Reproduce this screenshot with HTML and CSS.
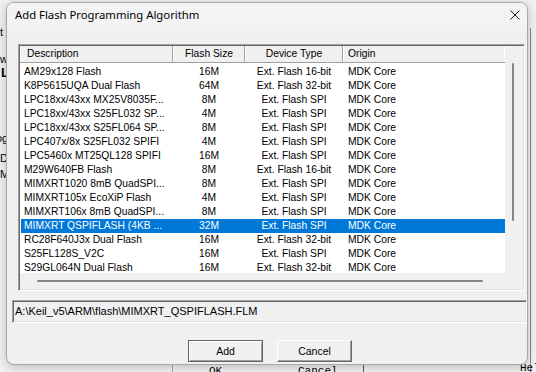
FILE: index.html
```html
<!DOCTYPE html>
<html>
<head>
<meta charset="utf-8">
<link rel="stylesheet" href="styles.css">
</head>
<body>
<div class="desk">
  <div class="frag fl">t</div>
  <div class="frag fw">w</div>
  <div class="frag fL">L</div>
  <div class="frag fog">og</div>
  <div class="frag fD">D</div>
  <div class="frag fM">M</div>
  <div class="vline v1"></div>
  <div class="vline v2"></div>
  <div class="vline v3"></div>
  <div class="frag bok">OK</div>
  <div class="frag bcancel">Cancel</div>
  <div class="frag bhelp">Help</div>
</div>
<div class="dialog">
  <div class="titlebar">
    <span class="title">Add Flash Programming Algorithm</span>
    <svg class="close" width="10" height="10" viewBox="0 0 10 10"><path d="M0.5 0.5 L9.5 9.5 M9.5 0.5 L0.5 9.5" stroke="#1a1a1a" stroke-width="1" fill="none"/></svg>
  </div>
  <div class="body">
    <div class="listbox">
      <div class="listmain">
        <div class="lv">
          <div class="hdr">
            <div class="hc c1">Description</div>
            <div class="hc c2">Flash Size</div>
            <div class="hc c3">Device Type</div>
            <div class="hc c4">Origin</div>
          </div>
          <div class="rows">
            <div class="row"><span class="c1">AM29x128 Flash</span><span class="c2">16M</span><span class="c3">Ext. Flash 16-bit</span><span class="c4">MDK Core</span></div>
            <div class="row"><span class="c1">K8P5615UQA Dual Flash</span><span class="c2">64M</span><span class="c3">Ext. Flash 32-bit</span><span class="c4">MDK Core</span></div>
            <div class="row"><span class="c1">LPC18xx/43xx MX25V8035F...</span><span class="c2">8M</span><span class="c3">Ext. Flash SPI</span><span class="c4">MDK Core</span></div>
            <div class="row"><span class="c1">LPC18xx/43xx S25FL032 SP...</span><span class="c2">4M</span><span class="c3">Ext. Flash SPI</span><span class="c4">MDK Core</span></div>
            <div class="row"><span class="c1">LPC18xx/43xx S25FL064 SP...</span><span class="c2">8M</span><span class="c3">Ext. Flash SPI</span><span class="c4">MDK Core</span></div>
            <div class="row"><span class="c1">LPC407x/8x S25FL032 SPIFI</span><span class="c2">4M</span><span class="c3">Ext. Flash SPI</span><span class="c4">MDK Core</span></div>
            <div class="row"><span class="c1">LPC5460x MT25QL128 SPIFI</span><span class="c2">16M</span><span class="c3">Ext. Flash SPI</span><span class="c4">MDK Core</span></div>
            <div class="row"><span class="c1">M29W640FB Flash</span><span class="c2">8M</span><span class="c3">Ext. Flash 16-bit</span><span class="c4">MDK Core</span></div>
            <div class="row"><span class="c1">MIMXRT1020 8mB QuadSPI...</span><span class="c2">8M</span><span class="c3">Ext. Flash SPI</span><span class="c4">MDK Core</span></div>
            <div class="row"><span class="c1">MIMXRT105x EcoXiP Flash</span><span class="c2">4M</span><span class="c3">Ext. Flash SPI</span><span class="c4">MDK Core</span></div>
            <div class="row"><span class="c1">MIMXRT106x 8mB QuadSPI...</span><span class="c2">8M</span><span class="c3">Ext. Flash SPI</span><span class="c4">MDK Core</span></div>
            <div class="row sel"><span class="c1">MIMXRT QSPIFLASH (4KB ...</span><span class="c2">32M</span><span class="c3">Ext. Flash SPI</span><span class="c4">MDK Core</span></div>
            <div class="row"><span class="c1">RC28F640J3x Dual Flash</span><span class="c2">16M</span><span class="c3">Ext. Flash 32-bit</span><span class="c4">MDK Core</span></div>
            <div class="row"><span class="c1">S25FL128S_V2C</span><span class="c2">16M</span><span class="c3">Ext. Flash SPI</span><span class="c4">MDK Core</span></div>
            <div class="row"><span class="c1">S29GL064N Dual Flash</span><span class="c2">16M</span><span class="c3">Ext. Flash 32-bit</span><span class="c4">MDK Core</span></div>
          </div>
        </div>
        <div class="vscroll"><div class="vthumb"></div></div>
      </div>
      <div class="hscroll"><div class="hthumb"></div></div>
    </div>
    <div class="path">A:\Keil_v5\ARM\flash\MIMXRT_QSPIFLASH.FLM</div>
    <div class="buttons">
      <button class="btn default">Add</button>
      <button class="btn">Cancel</button>
    </div>
  </div>
</div>
</body>
</html>
```

FILE: styles.css
```css
html, body {
  margin: 0;
  padding: 0;
}
body {
  width: 536px;
  height: 372px;
  overflow: hidden;
  background: #f0f0f0;
  position: relative;
  font-family: "Liberation Sans", Arial, sans-serif;
  color: #000;
}
.desk {
  position: absolute;
  inset: 0;
}
.frag {
  position: absolute;
  font-size: 11px;
  line-height: 12px;
  color: #000;
}
.fl { left: 0; top: 26px; }
.fw { left: 0; top: 53px; }
.fL { left: 1px; top: 66px; font-weight: bold; font-size: 13px; line-height: 13px; }
.fog { left: -4px; top: 132px; }
.fD { left: 0; top: 152px; }
.fM { left: 0; top: 168px; }
.bok { left: 209px; top: 365px; font-family: "Liberation Mono", monospace; }
.bcancel { left: 298px; top: 365px; font-family: "Liberation Mono", monospace; }
.bhelp { left: 520px; top: 362px; font-family: "Liberation Mono", monospace; }
.vline {
  position: absolute;
  width: 1px;
  background: #8a8a8a;
}
.v1 { left: 530px; top: 28px; height: 344px; }
.v2 { left: 363px; top: 360px; height: 12px; background: #555; }
.v3 { left: 172px; top: 360px; height: 12px; background: #aaa; }

.dialog {
  position: absolute;
  left: 6px;
  top: 2px;
  width: 520px;
  height: 361px;
  border: 1px solid #a8a8a8;
  border-radius: 8px;
  background: #f0f0f0;
  box-shadow: 0 2px 10px rgba(0, 0, 0, 0.22);
  overflow: hidden;
  display: flex;
  flex-direction: column;
}
.titlebar {
  height: 28px;
  flex: none;
  background: #f3f3f3;
  display: flex;
  justify-content: space-between;
  align-items: flex-start;
  padding: 0 7px 0 8px;
}
.title {
  font-family: "Segoe UI", "Noto Sans", sans-serif;
  font-size: 11.3px;
  line-height: 20px;
  padding-top: 2px;
  color: #000;
}
.close {
  margin-top: 7px;
  display: block;
}
.body {
  flex: 1;
  padding: 13px 0 0 5px;
  display: flex;
  flex-direction: column;
}
.listbox {
  margin-left: 6px;
  width: 503px;
  height: 243px;
  border: 1px solid;
  border-color: #a0a0a0 #ffffff #ffffff #a0a0a0;
  box-shadow: inset 1px 1px 0 #696969, inset -1px -1px 0 #e3e3e3;
  padding: 1px;
  display: flex;
  flex-direction: column;
  box-sizing: content-box;
  flex: none;
}
.listmain {
  height: 227px;
  display: flex;
  flex: none;
}
.lv {
  width: 485px;
  background: #fff;
  overflow: hidden;
  font-size: 10.3px;
}
.hdr {
  display: flex;
  height: 16px;
  background: #f0f0f0;
  border-bottom: 1px solid #a0a0a0;
}
.hc {
  box-sizing: border-box;
  line-height: 16px;
  border-left: 1px solid #fff;
  border-right: 1px solid #a0a0a0;
  white-space: nowrap;
}
.hdr .c1 { padding-left: 6px; }
.hdr .c4 { padding-left: 4px; border-right: 1px solid #fff; }
.c1 { width: 153px; flex: none; }
.c2 { width: 72px; flex: none; text-align: center; }
.c3 { width: 98px; flex: none; text-align: center; }
.c4 { width: 162px; flex: none; }
.rows {
  padding-top: 2px;
}
.row {
  display: flex;
  height: 14px;
  line-height: 14px;
  white-space: nowrap;
}
.row .c1 { padding-left: 4px; box-sizing: border-box; }
.row .c4 { padding-left: 5px; box-sizing: border-box; }
.row.sel {
  background: #0078d7;
  color: #fff;
  margin-left: 1px;
}
.row.sel .c1 { width: 152px; padding-left: 3px; }
.vscroll {
  width: 16px;
  background: #f0f0f0;
  position: relative;
}
.vthumb {
  position: absolute;
  left: 7px;
  top: 17px;
  width: 2px;
  height: 158px;
  background: #858585;
  border-radius: 1px;
}
.hscroll {
  height: 16px;
  background: #f0f0f0;
  position: relative;
  flex: none;
}
.hthumb {
  position: absolute;
  left: 17px;
  top: 7px;
  width: 446px;
  height: 2px;
  background: #858585;
  border-radius: 1px;
}
.path {
  margin-top: 9px;
  width: 511px;
  height: 21px;
  border: 1px solid;
  border-color: #a0a0a0 #ffffff #ffffff #a0a0a0;
  box-shadow: inset 1px 1px 0 #696969, inset -1px -1px 0 #e3e3e3;
  padding-left: 2px;
  box-sizing: content-box;
  font-size: 11px;
  line-height: 21px;
  white-space: nowrap;
  flex: none;
}
.buttons {
  display: flex;
  gap: 14px;
  margin-top: 17px;
  padding-left: 176px;
}
.btn {
  width: 75px;
  height: 22px;
  margin: 0;
  padding: 0;
  background: #f0f0f0;
  font-family: "Liberation Sans", Arial, sans-serif;
  font-size: 10.5px;
  color: #000;
  border: 1px solid;
  border-color: #ffffff #696969 #696969 #ffffff;
  box-shadow: inset -1px -1px 0 #a0a0a0;
  border-radius: 0;
}
.btn.default {
  border-color: #646464;
  box-shadow: inset 1px 1px 0 #fff, inset -1px -1px 0 #a0a0a0;
}
```
